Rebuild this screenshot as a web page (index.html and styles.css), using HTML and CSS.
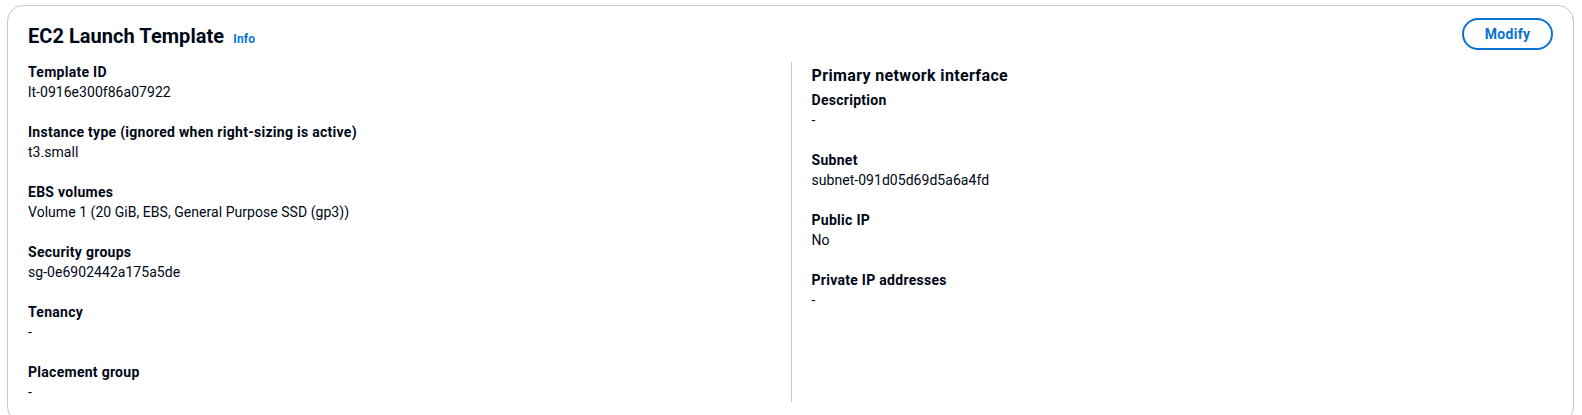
FILE: index.html
```html
<!DOCTYPE html>
<html lang="en">
<head>
<meta charset="utf-8">
<title>EC2 Launch Template</title>
<link rel="stylesheet" href="styles.css">
</head>
<body>
<section class="container">
  <header class="container-header">
    <div class="title-wrap">
      <h2 class="title">EC2 Launch Template</h2>
      <a class="info-link" href="#">Info</a>
    </div>
    <button class="btn" type="button">Modify</button>
  </header>
  <div class="columns">
    <div class="column">
      <div class="kv"><div class="kv-label">Template ID</div><div class="kv-value">lt-0916e300f86a07922</div></div>
      <div class="kv"><div class="kv-label">Instance type (ignored when right-sizing is active)</div><div class="kv-value">t3.small</div></div>
      <div class="kv"><div class="kv-label">EBS volumes</div><div class="kv-value">Volume 1 (20 GiB, EBS, General Purpose SSD (gp3))</div></div>
      <div class="kv"><div class="kv-label">Security groups</div><div class="kv-value">sg-0e6902442a175a5de</div></div>
      <div class="kv"><div class="kv-label">Tenancy</div><div class="kv-value">-</div></div>
      <div class="kv"><div class="kv-label">Placement group</div><div class="kv-value">-</div></div>
    </div>
    <div class="column column-right">
      <h3 class="subheading">Primary network interface</h3>
      <div class="kv"><div class="kv-label">Description</div><div class="kv-value">-</div></div>
      <div class="kv"><div class="kv-label">Subnet</div><div class="kv-value">subnet-091d05d69d5a6a4fd</div></div>
      <div class="kv"><div class="kv-label">Public IP</div><div class="kv-value">No</div></div>
      <div class="kv"><div class="kv-label">Private IP addresses</div><div class="kv-value">-</div></div>
    </div>
  </div>
</section>
</body>
</html>
```
FILE: styles.css
```css
* { box-sizing: border-box; }
html, body { background: #ffffff; }
body {
  margin: 0;
  padding: 5px 8px 0 7px;
  font-family: Roboto, "Liberation Sans", sans-serif;
  font-size: 14px;
  line-height: 20px;
  color: #000716;
}
.container {
  border: 1px solid #c6c6cd;
  border-radius: 16px;
  background: #fff;
  padding: 12px 20px 20px 20px;
}
.container-header {
  display: flex;
  justify-content: space-between;
  align-items: flex-start;
}
.title-wrap {
  display: flex;
  align-items: baseline;
  gap: 9px;
  padding-top: 4px;
}
.title {
  margin: 0;
  font-size: 20px;
  line-height: 28px;
  font-weight: 700;
  letter-spacing: 0.05px;
}
.info-link {
  font-size: 12px;
  font-weight: 700;
  color: #0972d3;
  text-decoration: none;
  line-height: 16px;
  letter-spacing: 0.2px;
}
.btn {
  font-family: inherit;
  font-size: 14px;
  line-height: 22px;
  font-weight: 700;
  letter-spacing: 0.3px;
  color: #0972d3;
  background: #fff;
  border: 2px solid #0972d3;
  border-radius: 20px;
  padding: 2px 20px;
  height: 32px;
  width: 91px;
  cursor: pointer;
}
.columns {
  display: grid;
  grid-template-columns: 1fr 1fr;
  margin-top: 12px;
}
.column {
  display: flex;
  flex-direction: column;
  gap: 20px;
}
.column-right {
  border-left: 1px solid #c6c6cd;
  padding-left: 20px;
  gap: 0;
}
.column-right .kv + .kv { margin-top: 20px; }
.subheading {
  margin: 4px 0 4px 0;
  font-size: 16px;
  line-height: 20px;
  font-weight: 700;
  letter-spacing: 0.36px;
}
.kv-label {
  font-weight: 700;
  letter-spacing: 0.28px;
}
.kv-value {
  font-weight: 400;
  letter-spacing: 0.04px;
}
```
